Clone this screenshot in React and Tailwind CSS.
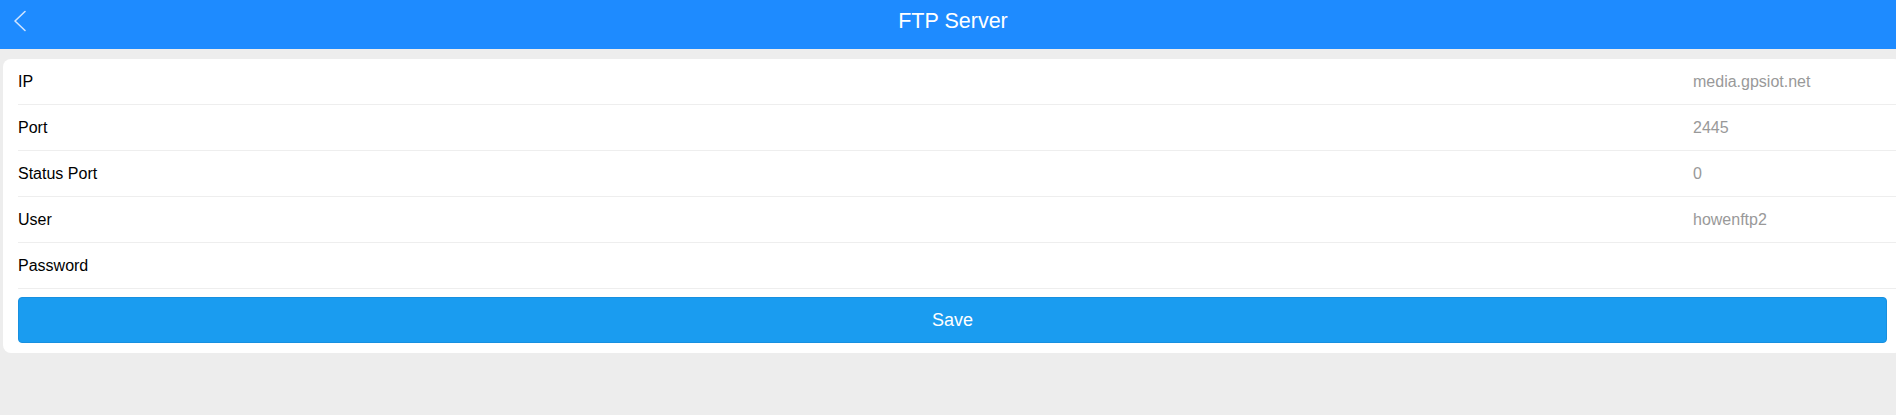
import React from 'react';

const rows = [
  { label: 'IP', value: 'media.gpsiot.net' },
  { label: 'Port', value: '2445' },
  { label: 'Status Port', value: '0' },
  { label: 'User', value: 'howenftp2' },
  { label: 'Password', value: '' },
];

const App = () => {
  return (
    <div className="w-[1896px] h-[415px] overflow-hidden bg-[#ededed] font-['Liberation_Sans',Arial,sans-serif]">
      <header className="relative h-[49px] bg-[#1e8bff] flex justify-center pl-[10px]">
        <button className="absolute left-[13px] top-[10px] w-[14px] h-[22px]">
          <svg width="14" height="22" viewBox="0 0 14 22" fill="none">
            <path d="M12 1.5 L2 11 L12 20.5" stroke="#cfe4ff" strokeWidth="1.6" strokeLinecap="round" strokeLinejoin="round" />
          </svg>
        </button>
        <h1 className="pt-[9px] text-[21.5px] leading-[24px] text-white">FTP Server</h1>
      </header>

      <div className="pt-[10px] pl-[3px]">
        <div className="w-[1899px] bg-white rounded-[8px] pl-[15px] pb-[10px]">
          {rows.map((row) => (
            <div
              key={row.label}
              className="flex items-center h-[46px] border-b border-[#eeeeee] text-[16px]"
            >
              <span className="flex-1 text-black">{row.label}</span>
              <span className="w-[209px] text-[#999999]">{row.value}</span>
            </div>
          ))}
          <div className="pr-[15px] pt-[8px]">
            <button className="w-full h-[46px] rounded-[4px] bg-[#1a9cf0] border border-[#1890e0] text-white text-[18px]">
              Save
            </button>
          </div>
        </div>
      </div>
    </div>
  );
};

export default App;
